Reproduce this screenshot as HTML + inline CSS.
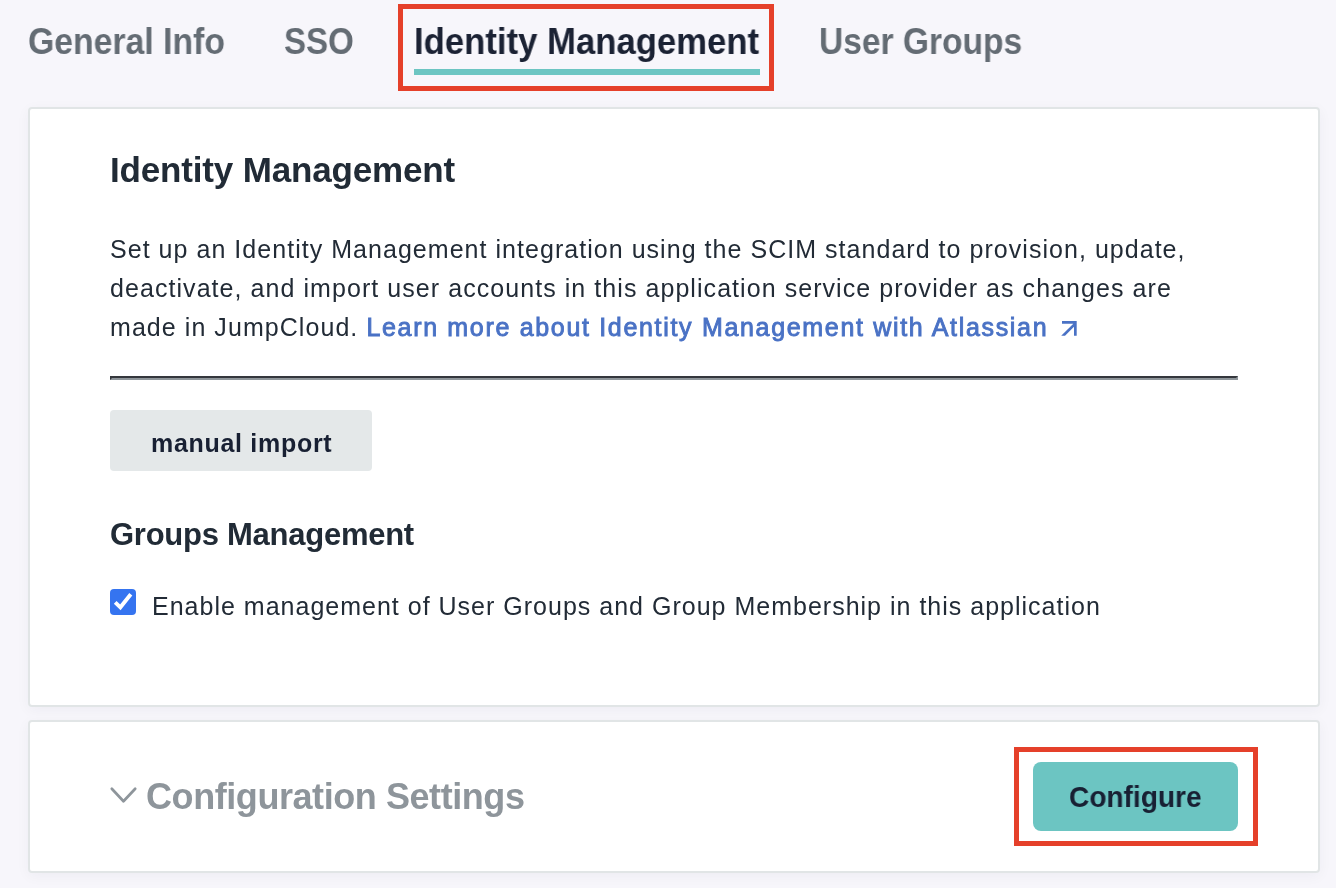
<!DOCTYPE html>
<html><head><meta charset="utf-8">
<style>
html,body{margin:0;padding:0;}
body{width:1336px;height:888px;overflow:hidden;background:#f7f6fb;position:relative;font-family:"Liberation Sans",sans-serif;}
.t{position:absolute;white-space:nowrap;line-height:40px;will-change:transform;}
.tab{font-weight:bold;font-size:36px;color:#646c74;top:22.2px;}
.card{position:absolute;left:28px;width:1288px;background:#fff;border:2px solid #e1e5e6;border-radius:4px;box-shadow:0 3px 14px rgba(30,30,80,0.045);}
.redbox{position:absolute;border:5px solid #e5402a;box-sizing:border-box;}
.p{font-size:25px;color:#222b36;letter-spacing:1.06px;}
</style></head>
<body>
<div class="t tab" id="tab1" style="left:28px;transform:scaleX(0.938);transform-origin:0 0;">General Info</div>
<div class="t tab" id="tab2" style="left:284px;transform:scaleX(0.918);transform-origin:0 0;">SSO</div>
<div class="t tab" id="tab3" style="left:414px;color:#1b2234;transform:scaleX(0.964);transform-origin:0 0;">Identity Management</div>
<div class="t tab" id="tab4" style="left:819px;transform:scaleX(0.932);transform-origin:0 0;">User Groups</div>
<div style="position:absolute;left:414px;top:69px;width:346px;height:6px;background:#6cc5c2;"></div>
<div class="redbox" style="left:398px;top:4px;width:376px;height:87px;"></div>

<div class="card" style="top:107px;height:596px;"></div>
<div class="card" style="top:720px;height:149px;"></div>

<div class="t" id="h1" style="left:110px;top:149.9px;font-size:35px;font-weight:bold;color:#212b36;letter-spacing:-0.17px;">Identity Management</div>
<div class="t p" id="l1" style="left:110px;top:229.3px;letter-spacing:1.037px;">Set up an Identity Management integration using the SCIM standard to provision, update,</div>
<div class="t p" id="l2" style="left:110px;top:268.3px;">deactivate, and import user accounts in this application service provider as changes are</div>
<div class="t p" id="l3" style="left:110px;top:307.3px;">made in JumpCloud. <span style="color:#4a72c5;-webkit-text-stroke:0.9px #4a72c5;letter-spacing:1.68px;">Learn more about Identity Management with Atlassian</span></div>
<svg style="position:absolute;left:1058px;top:318px;" width="24" height="22" viewBox="0 0 24 22"><path d="M4 3 L18.7 3 L18.7 17.8 L16 17.8 L16 8.8 L7 17.8 L3.2 17.8 L15.3 5.7 L4 5.7 Z" fill="#4a72c5"/></svg>

<div style="position:absolute;left:110px;top:376px;width:1124px;height:0;border-style:solid;border-width:2px;border-color:#34373c #8e959a #8e959a #34373c;"></div>

<div style="position:absolute;left:110px;top:410px;width:262px;height:61px;background:#e4e8e9;border-radius:4px;"></div>
<div class="t" id="btn1" style="left:151px;top:423.3px;font-size:25px;font-weight:bold;color:#182033;letter-spacing:0.7px;">manual import</div>

<div class="t" id="h2" style="left:110px;top:515.2px;font-size:31px;font-weight:bold;color:#212b36;letter-spacing:-0.26px;">Groups Management</div>
<div style="position:absolute;left:110px;top:589px;width:26px;height:26px;background:#3574f0;border-radius:4px;"></div>
<svg style="position:absolute;left:110px;top:589px;" width="26" height="26" viewBox="0 0 26 26"><path d="M5.2 13.3 L10.4 18.3 L20.8 5.2" stroke="#fff" stroke-width="3.9" fill="none"/></svg>
<div class="t p" id="cb" style="left:152px;top:586.3px;letter-spacing:1.005px;">Enable management of User Groups and Group Membership in this application</div>

<svg style="position:absolute;left:108px;top:784px;" width="32" height="22" viewBox="0 0 32 22"><path d="M3.8 4.8 L15.5 17.2 L27.2 4.8" stroke="#8e959b" stroke-width="2.7" fill="none" stroke-linecap="round" stroke-linejoin="round"/></svg>
<div class="t" id="cfg" style="left:146px;top:776.5px;font-size:36px;font-weight:bold;color:#8e959b;letter-spacing:-0.43px;">Configuration Settings</div>

<div style="position:absolute;left:1033px;top:762px;width:205px;height:69px;background:#6cc5c2;border-radius:8px;"></div>
<div class="t" id="btn2" style="left:1069px;top:776.9px;font-size:30px;font-weight:bold;color:#182033;transform:scaleX(0.936);transform-origin:0 0;">Configure</div>
<div class="redbox" style="left:1014px;top:747px;width:244px;height:99px;"></div>
</body></html>
